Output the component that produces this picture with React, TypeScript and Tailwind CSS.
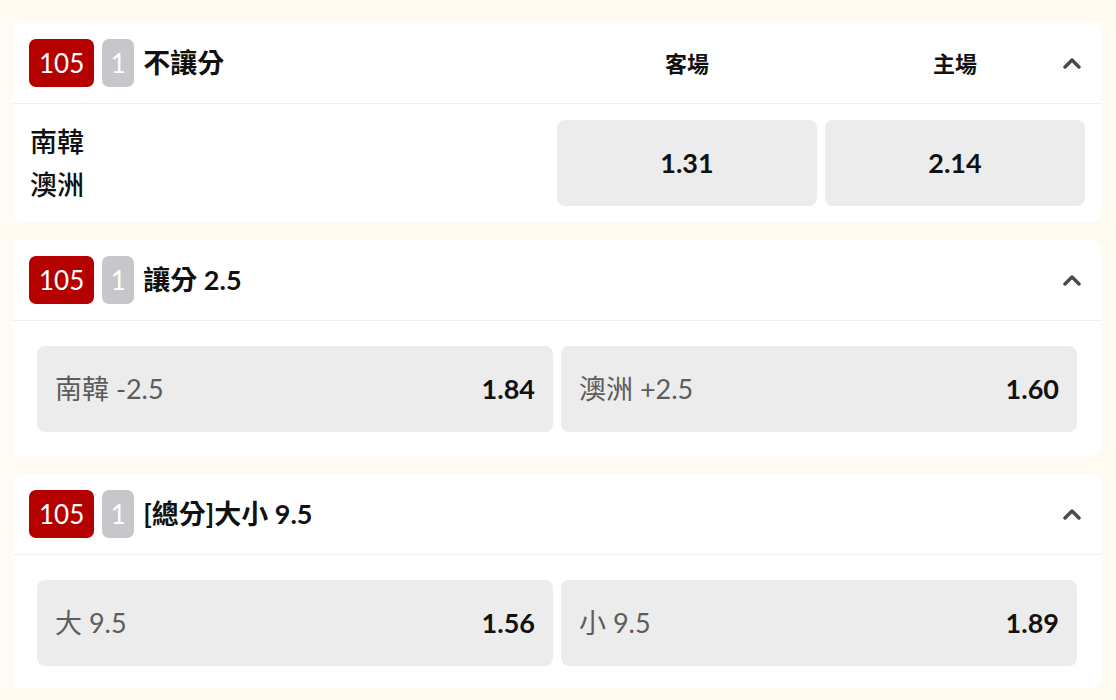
type Pick = { label: string; odds: string };

const font = "font-['Lato','Noto_Sans_CJK_TC',sans-serif]";

function Chevron() {
  return (
    <svg
      className="absolute right-[20px] top-1/2 -translate-y-1/2"
      width="18"
      height="12"
      viewBox="0 0 18 12"
      fill="none"
    >
      <polyline points="2,10 9,3 16,10" stroke="#4a4a4a" strokeWidth="3.4" strokeLinejoin="round" strokeLinecap="round" />
    </svg>
  );
}

function Header({ code, seq, title, columns }: { code: string; seq: string; title: string; columns?: string[] }) {
  return (
    <div className="relative flex h-[81px] items-center border-b border-[#efeff4] px-4">
      <div className="flex flex-1 items-center">
        <span className="flex h-12 items-center rounded-[7px] bg-[#b50000] px-[10px] text-[26px] text-white">
          {code}
        </span>
        <span className="ml-2 flex h-12 w-8 items-center justify-center rounded-[7px] bg-[#c6c6cb] text-[26px] text-white">
          {seq}
        </span>
        <span className="ml-[9px] text-[27px] font-bold text-[#111]">{title}</span>
      </div>
      {columns ? (
        <div className="flex gap-2">
          {columns.map((c) => (
            <div key={c} className="w-[260px] text-center text-[22px] font-bold text-[#111]">
              {c}
            </div>
          ))}
        </div>
      ) : null}
      <Chevron />
    </div>
  );
}

function PickButton({ label, odds }: Pick) {
  return (
    <button
      type="button"
      className="flex h-[86px] flex-1 items-center justify-between rounded-lg bg-[#ececec] px-[18px] text-[27px]"
    >
      <span className="text-[#5c5c5c]">{label}</span>
      <span className="font-bold text-[#111]">{odds}</span>
    </button>
  );
}

function PickMarket({ title, picks, last }: { title: string; picks: Pick[]; last?: boolean }) {
  return (
    <section className="rounded-lg bg-white">
      <Header code="105" seq="1" title={title} />
      <div className={last ? "flex gap-2 px-6 pb-[22px] pt-[25px]" : "flex gap-2 px-6 pb-6 pt-[25px]"}>
        {picks.map((p) => (
          <PickButton key={p.label} {...p} />
        ))}
      </div>
    </section>
  );
}

export default function App() {
  return (
    <div className={`min-h-[700px] bg-[#fffbf3] pb-3 pl-[13px] pr-[15px] pt-[23px] ${font}`}>
      <div className="flex flex-col gap-[18px]">
        <section className="rounded-lg bg-white">
          <Header code="105" seq="1" title="不讓分" columns={["客場", "主場"]} />
          <div className="flex p-4">
            <div className="flex flex-1 flex-col justify-center pl-px text-[27px] font-medium leading-[43px] text-[#111]">
              <span>南韓</span>
              <span>澳洲</span>
            </div>
            <div className="flex gap-2">
              {["1.31", "2.14"].map((o) => (
                <button
                  key={o}
                  type="button"
                  className="flex h-[86px] w-[260px] items-center justify-center rounded-lg bg-[#ececec] text-[27px] font-bold text-[#111]"
                >
                  {o}
                </button>
              ))}
            </div>
          </div>
        </section>

        <PickMarket
          title="讓分 2.5"
          picks={[
            { label: "南韓 -2.5", odds: "1.84" },
            { label: "澳洲 +2.5", odds: "1.60" },
          ]}
        />

        <PickMarket
          title="[總分]大小 9.5"
          last
          picks={[
            { label: "大 9.5", odds: "1.56" },
            { label: "小 9.5", odds: "1.89" },
          ]}
        />
      </div>
    </div>
  );
}
